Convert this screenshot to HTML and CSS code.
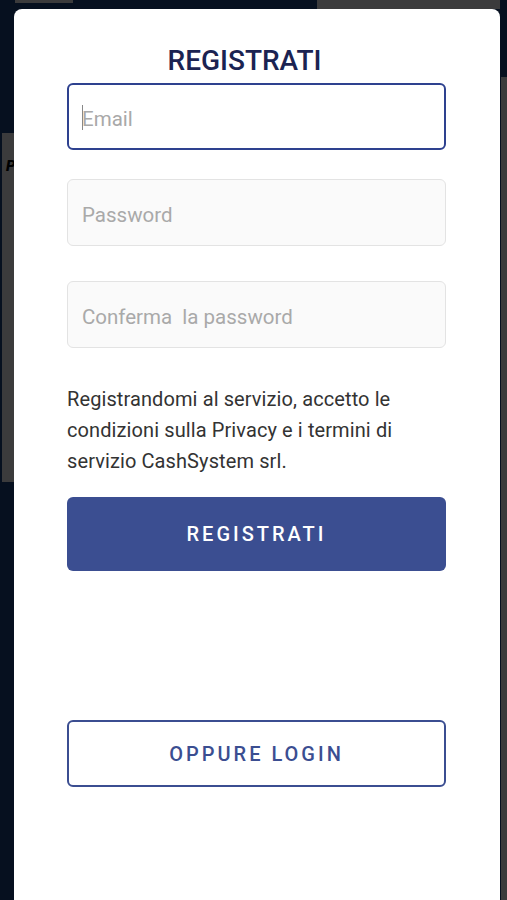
FILE: index.html
```html
<!DOCTYPE html>
<html>
<head>
<meta name="viewport" content="width=device-width, initial-scale=1">
<link rel="stylesheet" href="styles.css">
</head>
<body>

<div class="backdrop">
  <div class="bg-tab"></div>
  <div class="bg-top-right"></div>
  <div class="bg-left"><span>P</span></div>
  <div class="bg-right"></div>
</div>

<div class="modal">
  <h2 class="title">REGISTRATI</h2>
  <form class="form">
    <div class="field-wrap">
      <input type="text" class="field field-focus" placeholder="Email">
      <span class="caret"></span>
    </div>
    <input type="password" class="field field-pass" placeholder="Password">
    <input type="password" class="field field-confirm" placeholder="Conferma&nbsp; la password">
    <p class="terms">Registrandomi al servizio, accetto le condizioni sulla Privacy e i termini di servizio CashSystem srl.</p>
    <div class="btn btn-primary">REGISTRATI</div>
    <div class="btn btn-outline">OPPURE LOGIN</div>
  </form>
</div>

</body>
</html>
```

FILE: styles.css
```css
* {
  box-sizing: border-box;
}

body {
  margin: 0;
  height: 900px;
  background-color: #06101f;
  font-family: Roboto, "Liberation Sans", sans-serif;
  overflow: hidden;
}

/* page behind the popup */
.backdrop div {
  position: absolute;
  background-color: #3b3b3c;
}

.bg-tab {
  top: 0;
  left: 15px;
  width: 58px;
  height: 3px;
}

.bg-top-right {
  top: 0;
  left: 317px;
  width: 183px;
  height: 9px;
}

.bg-left {
  top: 133px;
  left: 2px;
  width: 12px;
  height: 349px;
}

.bg-left span {
  display: block;
  padding: 24px 0 0 4px;
  font-size: 15px;
  font-weight: 900;
  font-style: italic;
  color: #000;
}

.bg-right {
  top: 77px;
  left: 501px;
  width: 6px;
  height: 823px;
}

.modal {
  position: absolute;
  top: 9px;
  left: 14px;
  width: 486px;
  height: 891px;
  background-color: #fff;
  border-radius: 8px 8px 0 0;
  padding: 0 54px 0 53px;
}

.title {
  margin: 37px 0 0 0;
  padding-right: 24px;
  text-align: center;
  font-size: 28px;
  font-weight: 500;
  color: #1b2352;
  line-height: 30px;
}

.form {
  display: flex;
  flex-direction: column;
}

.field-wrap {
  position: relative;
  margin-top: 7px;
}

.caret {
  position: absolute;
  left: 15px;
  top: 22px;
  width: 1px;
  height: 25px;
  background-color: #888;
}

.field {
  width: 100%;
  height: 67px;
  padding: 4px 14px 0 14px;
  border: 1px solid #e3e3e3;
  border-radius: 6px;
  background-color: #fafafa;
  font-family: Roboto, "Liberation Sans", sans-serif;
  font-size: 20.5px;
  outline: none;
}

.field::placeholder {
  color: #a9a9a9;
}

.field-focus {
  display: block;
  border: 2px solid #2e418f;
  background-color: #fff;
  padding-left: 13px;
}

.field-pass {
  margin-top: 29px;
}

.field-confirm {
  margin-top: 35px;
}

.terms {
  margin: 36px 0 0 0;
  font-size: 20px;
  letter-spacing: 0.1px;
  line-height: 31px;
  color: #333;
}

.btn {
  display: flex;
  align-items: center;
  justify-content: center;
  border-radius: 6px;
  font-size: 20px;
  font-weight: 500;
  letter-spacing: 3px;
}

.btn-primary {
  margin-top: 20px;
  height: 74px;
  background-color: #3b4e91;
  color: #fff;
}

.btn-outline {
  margin-top: 149px;
  height: 67px;
  border: 2px solid #3b4e91;
  color: #3b4e91;
}
```
